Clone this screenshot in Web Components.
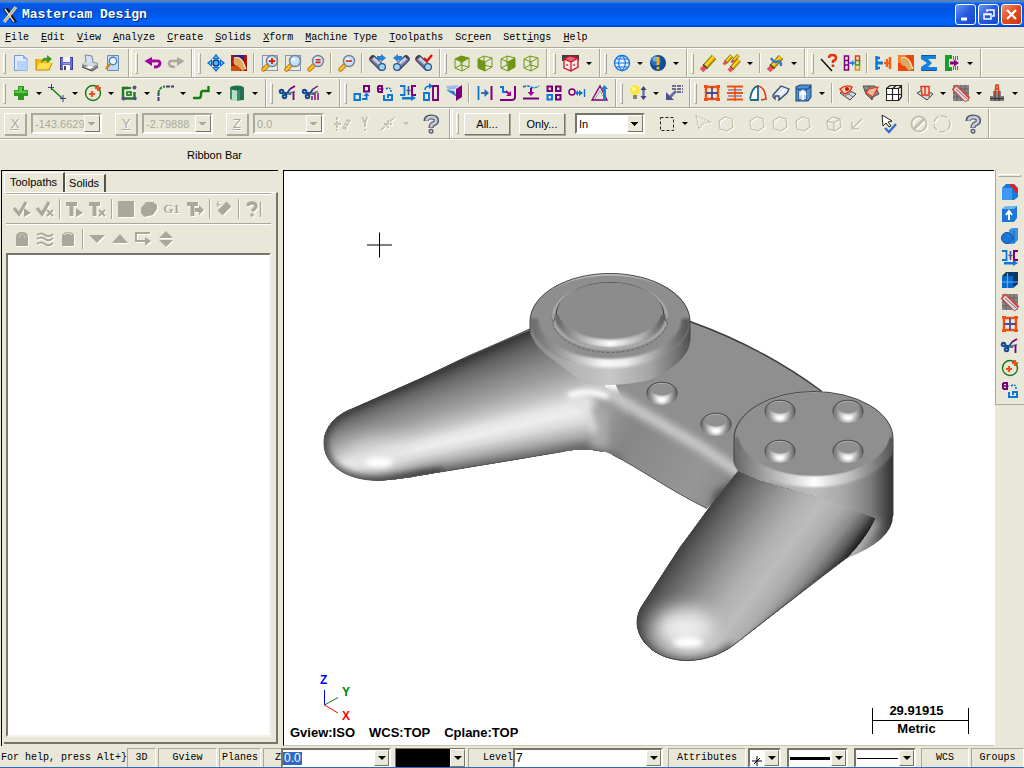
<!DOCTYPE html>
<html lang="en">
<head>
<meta charset="utf-8">
<title>Mastercam Design</title>
<style>
html,body{margin:0;height:100%;background:#e9e8d8}
body{font:11px "Liberation Sans",Arial,sans-serif;color:#000;overflow:hidden}
</style>
</head>
<body>
<cam-app></cam-app>
<script>
/* ---------- helpers ---------- */
function define(name, css, html, init){
  customElements.define(name, class extends HTMLElement{
    connectedCallback(){
      if(this.shadowRoot) return;
      const r=this.attachShadow({mode:'open'});
      r.innerHTML='<style>*{box-sizing:border-box}button,input,select{font:inherit;color:inherit;margin:0}'+css+'</style>'+(typeof html==='function'?html(this):html);
      if(init) init(this,r);
    }
  });
}
const S=(d,c,w=1.5,f='none',x='')=>`<path d="${d}" stroke="${c}" stroke-width="${w}" fill="${f}" ${x}/>`;
const F=(d,c)=>`<path d="${d}" fill="${c}"/>`;
const R=(x,y,w,h,f,s='none',sw=1)=>`<rect x="${x}" y="${y}" width="${w}" height="${h}" fill="${f}" stroke="${s}" stroke-width="${sw}"/>`;
const C=(x,y,r,f,s='none',sw=1)=>`<circle cx="${x}" cy="${y}" r="${r}" fill="${f}" stroke="${s}" stroke-width="${sw}"/>`;

/* ---------- icon set, 20 x 20 grid ---------- */
const mag=s=>S('M7.5 12.5L3.5 16.5','#a86000',4.4,'none','stroke-linecap="round"')+S('M7.5 12.5L3.5 16.5','#ffc020',2.8,'none','stroke-linecap="round"')+C(12,8,5.5,'#bfe0ff','#7a7f90',1.4)+C(10.5,6.5,2,'#eaf6ff')+s;
const dots=R(2.5,2.5,15,15,'none','#2040a0').replace('/>',' stroke-dasharray="1 1"/>');
const spy=(a,flip)=>`<g ${flip?'transform="translate(20 0) scale(-1 1)"':''}>`+S('M5 6L13 14','#3c3f58',7.4,'none','stroke-linecap="round"')+S('M3 6L11 14','#74789a',2.4)+S('M5 5L13 12','#c4cce0',3)+C(14,14,3.4,'#9cd8f4','#30508a',1.2)+'</g>'+a;
const cube=f=>f+S('M3 6L9 3L17 5L17 14L10 18L3 15ZM3 6L10 9L17 5M10 9V18M9 3V12L3 15M9 12L17 14','#6f9616',1);
const eraser=S('M6 14L15 4','#7a5a00',6)+S('M6 14L15 4','#f2c400',4.4)+S('M7 12L14 4','#ffe870',1)+S('M8.500 13.500L16 5.500','#b08800',1)+S('M2.500 17.500L6 14','#e85060',5)+S('M4 11.500L8.500 15.500','#333',1.2);
const brush=F('M5 5Q11 3 14 9L17 16L13 18L9 13Q3 13 5 5Z','#e0a860')+S('M5 5Q11 3 14 9L17 16','#fff0c0',1.2);
const scis=C(3.5,8.5,1.8,'#a8bcd8','#104890',1.9)+C(6.5,13.5,1.8,'#a8bcd8','#104890',1.9)+S('M5 9.500L13 11M8 12L12 6','#104890',1.8)+S('M9 11L17 8.500','#6a7088',1.4);
const hexa='M3 7L9 3L16 5L17 13L11 17L4 15Z';
const G='#aca899', ghost='#c3c0ad';
const qm=(c,e)=>S('M5 7Q5 3 10 3Q15.500 3 15.500 6.500Q15.500 9 12 10Q10 11 10 14',e,5.2)+S('M5.500 6.600Q6 3.200 10 3.200Q15.200 3 15.200 6.500Q15.200 9 12 10Q10 11 10 13.500',c,2.8)+C(10,17.3,1.9,c,e,1.2);
const plane=S('M2 10L9 6L18 11L12 17Z','#444',1,'#cfd4da')+S('M6 8L15 14M14 8.500L7 13','#777',1);
const pur='#780078', blu='#0a78d8';
const I={
new:F('M3 2H12L16 6V18H3Z','#dfeaff')+S('M3.5 2.5H12L16 6V17.5H3.5Z','#7896d0',1)+F('M6 8H16V17.5H6Z','#b4d4fa')+F('M12 2V6H16Z','#8fb0e8'),
open:F('M2 6H8L10 8H16V17H2Z','#f0b810')+F('M5 10H19L15 17H2Z','#ffdf50')+S('M2 6V17H15L18 10','#b88a00',1)+F('M7 10Q8 4 13 5V2L18 6L13 10V8Q9 7 7 10Z','#3a9a20'),
save:R(3.5,4.5,12,12,'#6a6ad0','#3c3c98')+R(6,4,7,5,'#f4f4ff')+R(6,12,7,5,'#fff')+R(7,13,2,4,'#444')+S('M6 10.5H13','#9898e8',1),
print:F('M2 11L8 7L18 10L18 14L12 18L2 14Z','#8a8f98')+F('M2 11L8 8L18 11L12 14Z','#d4d8de')+F('M6 9L5 2L12 3L13 9Z','#cfe2f8')+S('M6 9L5 2L12 3L13 9','#7a88a0',1)+F('M5 14L10 16L14 14L9 13Z','#fff')+S('M2 14L12 18L18 14','#444',1),
prev:F('M4 2H15V18H4Z','#bcdcfa')+S('M4.5 2.5H15.5V17.5H4.5Z','#6a8ab8',1)+C(10,8,3.7,'#e8f6ff','#5a7aa8',1.4)+S('M7 11L3 16','#c8862a',2.5),
undo:S('M5 8H12Q17 7 17 10.500Q16.500 14 11 14','#a000a0',2.8)+F('M1.500 8L9 4V13Z','#a000a0'),
redo:S('M15 8H8Q3 7 3 10.500Q3.500 14 9 14',G,2.6)+F('M18.500 8L11 4V13Z',G),
pan:C(10,10,3,'#50b8f8','#003c9c',1.5)+F('M10 1L14 6H6ZM10 19L14 14H6ZM1 10L6 6V14ZM19 10L14 6V14Z','#0868d0')+F('M10 3L12 5H8ZM10 17L12 15H8ZM3 10L5 8V12ZM17 10L15 8V12Z','#60c8ff'),
fit:R(2,2,16,16,'#a81810')+R(5,2,10,6,'#302080')+R(2,13,9,5,'#d05010')+brush,
zwin:dots+mag(S('M12 5V11M9 8H15','#e02000',1.8)),
ztar:dots+mag(''),
zeq:mag(S('M9.5 6.8H14.5M9.5 9.4H14.5','#e02000',1.6)),
unzoom:mag(S('M9 8H15','#e04020',1.8)),
spy1:spy(F('M9 3H13V1L18 5L13 9V7H9Z','#2080e0')),
spy2:spy(F('M11 3H7V1L2 5L7 9V7H11Z','#2080e0'),1),
spy3:spy(S('M10 5L13 8L18 2','#e01010',2.4)),
ctop:cube(F('M3 6L9 3L17 5L10 9Z','#6f9616')),
cfront:cube(F('M3 6L10 9V18L3 15Z','#6f9616')),
cright:cube(F('M10 9L17 5V14L10 18Z','#6f9616')),
ciso:cube(''),
redcube:F('M1 2H18V8H1Z','#404040')+F('M3 6L9 3L17 5L17 14L10 18L3 15Z','#ffe4e4')+F('M3 6L9 3L17 5L10 9Z','#e86878')+S('M3 6L9 3L17 5L17 14L10 18L3 15ZM3 6L10 9L17 5M10 9V18','#c01828',1.3)+C(6,12,1,'#d04050')+C(13,12,1,'#d04050'),
globe:C(10,10,7.5,'#e6f2ff','#1070e0',1.3)+S('M2 10H18M4 6H16M4 14H16M10 2Q3 10 10 18Q17 10 10 2','#1070e0',1.1),
ball:C(10,10,8,'#104c98')+C(8,8,5,'#2c70c0')+C(7,6,2.5,'#70b0e8')+S('M10 4V12','#ffb400',2.8)+C(10,15,1.6,'#ffb400'),
eraser:eraser,
erasers:'<g transform="scale(.65)">'+eraser+'</g><g transform="translate(5 4) scale(.8)">'+eraser+'</g><g transform="translate(8 0) scale(.55)">'+eraser+'</g>',
paint:eraser+S('M5 5Q8 10 10 9Q15 6 15 13','#2878d0',2.4),
delq:S('M2 6L13 18','#111',1.5)+S('M10 5Q10 2 13.5 2Q17 2 17 5Q17 7 14 8V10','#e03010',2.4)+R(12.7,11.5,2.6,2.4,'#e03010'),
chain:S('M2.5 3V17H6.5V3ZM2.5 7.5H6.5M2.5 12H6.5',pur,1.5)+S('M13.5 3V7.5H17.5V3Z','#e04010',1.5)+S('M13.5 7.5V12H17.5V7.5','#20a020',1.5)+S('M13.5 12V17H17.5V12','#e09010',1.5)+F('M7.500 9H10V7L13 10L10 13V11H7.500Z','#2080e0'),
tree:S('M3.5 3V17M3 5H7M3 15H7','#0a78d8',2.4)+S('M3 10H10',blu,3)+S('M17 4V16M11 10H17M14 6V14','#f06010',2.4),
brush:R(2,2,16,16,'#e84810')+R(2,2,8,8,'#f88030')+brush,
sigma:F('M2 2H17V6L9 6L13 10L9 14L18 14V18H2V14L8 10L2 6Z','#1a80e0')+S('M3 2.500H17M3 17.500H17','#0858a8',1),
cgreen:S('M10 4H5V16H10','#18a028',4)+S('M11.5 3V7M13.5 3V7M15.5 3V7M11.5 13V17M13.5 13V17M15.5 13V17','#18a028',1)+F('M8 8.5H12V6.5L17 10L12 13.5V11.5H8Z','#800080'),
plus:F('M7 3H13V7H17V13H13V17H7V13H3V7H7Z','#2f9a20')+F('M8 4H11V8H16V10H4V8H8Z','#58c840'),
line:S('M4 5L16 16','#188018',1.5)+S('M1 4.5H7M4.5 1V7M13 15.5H19M16 12V19','#3a3a98',1),
circ:C(10,10,7.5,'none','#187818',1.4)+S('M6 11H12M9 8V14M12 5H18M15 2V8','#f05020',2.2),
rect:S('M9 5H4V15.5H15.5V9','#207820',2.4)+S('M4 5H12','#207820',2.2)+R(8,9,4,3,'none','#187818',1.6)+C(15.5,4.5,2,'#50508a')+C(4.5,15.5,2,'#50508a')+C(16,15.5,1.8,'#50508a'),
fillet:S('M3.500 18V10','#3c3c78',2,'none','stroke-dasharray="4 1"')+S('M3.5 10Q4 4 10 3.5','#208020',2,'none','stroke-dasharray="3 1"')+S('M11 3.5H19','#3c3c78',2,'none','stroke-dasharray="4 1"'),
spline:S('M2 15H8Q10 15 10 12V11Q10 8 12 8H17.500V3','#108010',2.4),
cyl:F('M3 5V16Q10 20 17 16V5Z','#3c8c68')+F('M5 6V18H10V6Z','#b8e0c8')+F('M13 5H17V17H13Z','#207050')+'<ellipse cx="10" cy="5" rx="7" ry="2.5" fill="#207050"/>',
trim:scis+S('M12 6L17 3M15.500 9V17',pur,1.8),
trims:scis+S('M12 6L17 3M14 10V17M17 10V17M11 13V17',pur,1.4),
xf1:S('M2.5 11H8V17H2.5Z',blu,2)+S('M12 3H17V8.5H12Z',pur,2)+S('M10 16H14.500V12',blu,2)+F('M11.500 13L14.500 9.500L17.500 13Z',blu),
xf2:S('M3 3H7V9H3M3 9V3',pur,2)+S('M8.5 6H3',pur,1.5)+S('M9 12V17H17V12H13V14H12',blu,2)+S('M11 6Q16 3 16 9',blu,1.6,'none','stroke-dasharray="2 1"'),
xf3:S('M2 3H6.500V12H2',blu,1.8)+S('M18 3H14V12H18',pur,2)+S('M10.5 3V12M8.5 7.5H12.5','#50509a',1.6)+F('M4 14H13V12L18 15L13 18V16.5H4Z',blu),
xf4:S('M3 10H8V17H3Z',blu,1.9)+S('M12 3H17V17H12Z',pur,1.9)+S('M4 7Q4 3 9 3',blu,1.6)+F('M8 0L12 3L8 6Z',blu),
xf5:F('M2 3L15 2L11 6L4 7Z','#a0b8f0')+F('M2 7L10 8L13 14Z','#2080d0')+F('M12 6L18 2V14L12 18Z',pur),
off1:S('M3.5 3V17',blu,1.8)+S('M16.5 3V17',pur,2)+S('M6 10H12','#3060b0',1.8)+F('M9.500 6L14 10L9.500 14Z','#3060b0'),
off2:S('M2 4H5V9H9',blu,2)+S('M17 3V14Q17 17 13 17H2',pur,2)+S('M8 8L12 12','#a000a0',2)+F('M8 13H13V8Z','#a000a0'),
proj:S('M2 4Q7 2 10 4T18 3',blu,1.6,'none','stroke-dasharray="3 1"')+S('M10 5V10M2 15.5H18',pur,2)+F('M6.500 9H13.500L10 13Z','#a000a0'),
arr:R(3.5,3.5,4.5,4.5,'none',pur,2)+R(12,3.5,4.5,4.5,'none',pur,2)+R(3.5,12,4.5,4.5,'none',blu,2)+R(12,12,4.5,4.5,'none',pur,2),
move:C(5,9,3,'none',pur,1.5)+S('M9 10H15M17.500 6V14','#1070c8',1.4)+F('M12 7L16 10L12 13ZM11 7V13L8 10Z','#1070c8'),
scale:S('M2 17L10 3L17 17Z',pur,1.3)+S('M5 16L10 8L15 16','#50509a',1,'none','stroke-dasharray="1 1"')+F('M13 17V6H11L14.5 2L18 6H16V17Z','#2080d0'),
bulb:C(7,7,5,'#ffe438')+C(6,6,2,'#fff8a0')+R(5,12,4,4,'#888070')+S('M15.5 5V15','#7070a0',2.4)+F('M12.5 7L15.5 3L18.5 7ZM12.5 13H18.5L15.5 17Z','#404080'),
note:S('M8 3H19M8 6H19M13 9H19','#444478',1.4,'none','stroke-dasharray="4 1"')+S('M12 8L5 15','#6c6ca4',2.6)+F('M2 9V17H10Z','#505090'),
grid:R(4,4,12,12,'none','#f05010',2.4)+S('M10 4V16M4 10H16','#504890',1.8)+F('M2 2H6V5H2ZM14 2H18V5H14ZM2 15H6V18H2ZM14 15H18V18H14Z','#f05010'),
loft:S('M2 3.5H18M2 10H18M2 16.500H18','#f05010',2.2)+S('M3 7H17M3 13H17','#504890',1.2)+S('M10 3V18','#f05010',1.6),
rev:F('M3 16Q3 4 10 3V16Z','#fff')+S('M2 16Q4 4 10 3V17H2','#1c6c88',1.8)+S('M10 3Q17 4 18 16L13 17','#e03818',1.6),
sweep:F('M2 12L10 3L18 6L10 17Z','#dfe8f8')+S('M2 12L10 3L18 6L16 10L8 17L8 13L4 13L4 16L2 14Z','#34446c',1.3)+S('M8 12L14 6','#fff',1.5),
ext:F('M2 4L6 2H17V14L14 18H2Z','#5090d0')+S('M2 4L6 2H17V14L14 18H2ZM2 6H14L17 3M5 6V18M12 6V18','#204c80',1.1)+F('M5 8H12V16H5Z','#bcd8f0')+S('M9 17V9M6 12L9 8L12 12','#fff',2),
sf1:plane+S('M2 6Q8 1 14 4Q12 10 6 11Z','#e03818',1.4,'#f8c8b8')+C(9,6,2,'#d01000'),
sf2:F('M2 3L14 3L18 11L12 14L11 17L5 11Z','#8c8c8c')+S('M2 3L14 3L18 11L12 14L11 17L5 11ZM3 7L16 8M8 3L11 17','#555',1)+S('M8 6L17 4L12 14L5 10Z','#e03818',1.2,'#f0b8a0'),
box3:R(2.5,5.5,12,12,'#fff','#222')+S('M2.5 5.5L6 2.5H17.5V14L14.5 17.5M14.5 5.5L17.5 2.5M8.5 5.5V17.5M2.5 11.5H17.5M12 2.5L9 5.5','#222',1.2),
ms1:plane+F('M6 4H14V12H6Z','#ffd8c8')+S('M6 3.5H14V12H7ZM10 4V11','#e03818',1.5),
ms2:R(2,2,16,16,'#888')+S('M2 6H18M2 10H18M2 14H18M6 2V18M10 2V18M14 2V18','#555',.7)+S('M3 4L17 17','#e04030',7)+S('M4 5L16 17','#c8e4f4',4)+S('M5 6L16 16','#e04030',1),
ms3:R(3,13,14,5,'#777')+R(6,8,8,6,'#888')+S('M3 15.5H17M8 8V18M12 8V18','#333',1)+S('M8 12L9 2H11L12 12M8 6H12','#e03818',1.6),
hcube:R(2,6,11,12,'#0a68c8')+F('M2 6L6 2H18V14L13 18V6Z','#083868')+S('M2 12H18M7.5 3V18','#58b0f0',1.2),
sol1:F('M2 6L6 2H14L18 6V15L14 18H2Z','#1c78d8')+F('M2 6H12V18H2Z','#3c98f0')+F('M10 2L15 3L18 8V11L15 10L14 7L10 4Z','#f01818'),
sol2:F('M2 5L6 2H17V14L14 18H2Z','#1c78d8')+F('M2 5L6 2H17L14 5Z','#70b8f0')+S('M9 16V8M6 11L9 7L12 11','#fff',2),
sol3:F('M9 4Q11 2 13 2H18V14L14 18H9Z','#3c90e0')+C(7,12,5.5,'#1c78d8','#104c98',1)+S('M14 5V17','#0c60b8',1),
qhelp:qm('#c4c8d8','#50546c'),
xg1:S('M5 3V17M2 10H9M11 15L16 5M13 16L18 6',ghost,2,'none','stroke-dasharray="3 1"'),
xg2:S('M7 3L10 9L12 3M10 9V13M10 15V17',ghost,2),
xg3:S('M3 16L17 3M6 10H14M10 6V14',ghost,1.8,'none','stroke-dasharray="5 1"'),
xsel:R(3.5,3.5,13,13,'none','#222').replace('/>',' stroke-dasharray="3 2"/>'),
xp:S('M3 2L17 8L9 10L6 15Z',ghost,1.4,'none','stroke-dasharray="2 1"'),
xh:S(hexa,ghost,1.3),
xhc:S(hexa+'M3 7L10 9L16 5M10 9V17',ghost,1.4),
xar:S('M15 5L6 14M5 8V15H12',ghost,1.6),
ok:F('M4 1L14 7L10 8L13 12L11 13L8 9L5 12Z','#fff')+S('M4 1L14 7L10 8L13 12L11 13L8 9L5 12Z','#222',1)+S('M7 14L11 18L18 10','#3070d0',2.4),
no:C(10,10,7.5,'none',ghost,2)+S('M5 15L15 5',ghost,3),
xcirc:C(10,10,8,'none',ghost,1.4).replace('/>',' stroke-dasharray="7 2"/>'),
g1:S('M2 9L7 15L14 3',G,3.4)+F('M12 9L19 14L12 18Z',G),
g2:S('M2 9L7 15L14 3',G,3.4)+S('M12 11L18 17M18 11L12 17',G,2),
g3:S('M2 5H13M7.5 5V17',G,4)+F('M12 9L19 14L12 18Z',G),
g4:S('M2 5H13M7.5 5V17',G,4)+S('M12 11L18 17M18 11L12 17',G,2),
g5:R(2,2,16,16,G),g6:F('M7 3H14L18 6V10L14 16L5 18L2 14V9Z',G),
g8:S('M2 5H13M7.5 5V17',G,4)+F('M10 9H14V6L19 11L14 16V13H10Z',G),
g9:S('M6 14L15 5',G,7)+S('M2 5L7 6M4 2V8',G,1),
g10:S('M5 7Q5 4 9 4Q13 4 13 7Q13 9 9 12',G,3.4)+C(9,16,1.8,G)+S('M17.500 3V18',G,1.4),
h1:F('M4 8Q4 3 10 3Q16 3 16 8V17H4Z',G)+S('M7 9Q7 5 10 5Q13 5 13 9','#c8c5b4',1),
h2:S('M2 6Q6 3 10 6T18 5M2 10Q6 7 10 10T18 9M2 15Q6 12 10 15T18 14',G,2),
h3:F('M4 7Q5 3 10 3Q16 3 16 7V17H4Z',G)+S('M6 6Q10 2 14 6',"#e9e8d8",1),
h4:F('M2 6H18L10 14Z',G),h5:F('M2 14H18L10 5Z',G),
h6:S('M2 4H17M3 4V12H13',G,2)+F('M12 8V17L18 12Z',G),
h7:F('M3 9H17L10 2ZM3 11H17L10 18Z',G),
};
const svg=n=>`<svg width="20" height="20" viewBox="0 0 20 20" aria-hidden="true">${I[n]||''}</svg>`;
const t=(i,l,d)=>`<tool-btn icon="${i}" label="${l}" ${d?'drop':''}></tool-btn>`;
const sep='<tool-sep></tool-sep>';
const many=s=>s.trim().split(/\s+/).map(k=>k==='|'?sep:k.endsWith('+')?t(k.slice(0,-1),k.slice(0,-1),1):t(k,k)).join('');
const off=s=>many(s).replace(/<tool-btn/g,'<tool-btn dis');

define('tool-btn',`:host{display:flex;flex:none;height:100%;align-items:center}
button{border:0;background:none;padding:0;height:23px;display:flex;align-items:center;justify-content:center}
.b{width:23px}.d{width:13px}.d::after{content:"";border:3px solid transparent;border-top-color:#000;border-bottom:0}
:host([dis]) svg{filter:drop-shadow(1px 1px 0 #fff)}
:host([dis]) .d::after{border-top-color:#c3c0ad}
b{font:bold 13px "Liberation Serif",serif;color:#aca899;text-shadow:1px 1px #fff}`,
h=>`<button class="b" aria-label="${h.getAttribute('label')}">${h.getAttribute('icon')==='G1'?'<b>G1</b>':svg(h.getAttribute('icon'))}</button>`+(h.hasAttribute('drop')?'<button class="d" aria-label="More"></button>':''));
define('tool-sep',`:host{display:block;flex:none;width:8px;height:20px;align-self:center}
i{display:block;width:2px;height:100%;margin-left:3px;border-left:1px solid #aca899;border-right:1px solid #fbfaf4}`,'<i></i>');
define('tool-group',`:host{display:flex;flex:none;height:100%;align-items:center;padding:0 5px 0 3px;border-right:1px solid #fff;box-shadow:inset -1px 0 #aca899}
:host([wide]){border-right:3px double #fff}
:host([bare]){padding-right:8px}
.g{width:3px;height:21px;border:1px solid;border-color:#fff #aca899 #aca899 #fff;margin-right:3px;flex:none}
:host([bare]) .g{display:none}`,'<div class="g"></div><slot></slot>');
define('tool-row',`:host{display:flex;height:30px;flex:none;border-top:1px solid #fff;border-bottom:1px solid #aca899;overflow:hidden}`,'<slot></slot>');

define('title-bar',`:host{display:flex;align-items:center;height:27px;flex:none;padding:1px 2px 0 2px;border-top:1px solid #7a7a7a;
background:linear-gradient(#3c94ff,#0458e8 12%,#0054e0 35%,#0062fa 75%,#0060f4 90%,#0038c0);color:#fff}
h1{margin:0 0 0 4px;font:bold 13px "Liberation Mono",monospace;text-shadow:1px 1px #002878;flex:1}
button{width:21px;height:21px;margin-left:2px;padding:0;border:1px solid #fff;border-radius:3px;background:linear-gradient(135deg,#6c98f8,#2458e0 50%,#1c48cc);display:flex;align-items:center;justify-content:center}
.x{background:linear-gradient(135deg,#f09070,#e04c20 50%,#c83808)}svg{display:block}`,
`<svg width="16" height="18" viewBox="0 0 16 18"><path d="M1 3L6 2L15 16L11 17Z" fill="#111"/><path d="M14 1L2 16" stroke="#e8e0c0" stroke-width="3"/><path d="M14 1L2 16" stroke="#c09038" stroke-width="1"/><path d="M3 3L12 16" stroke="#ddd" stroke-width="1.4"/></svg>
<h1>Mastercam Design</h1>
<button aria-label="Minimize"><svg width="15" height="15"><path d="M3 12H9" stroke="#fff" stroke-width="3"/></svg></button>
<button aria-label="Restore"><svg width="15" height="15"><path d="M6 5V3H13V9H11M3 7H10V12H3ZM3 7.5H10" fill="none" stroke="#fff" stroke-width="1.5"/></svg></button>
<button class="x" aria-label="Close"><svg width="15" height="15"><path d="M3 3L12 12M12 3L3 12" stroke="#fff" stroke-width="2.2"/></svg></button>`);

define('menu-bar',`:host{display:block;flex:none;height:21px;border-bottom:1px solid #aca899}
nav{display:flex;font:10px/21px "Liberation Mono",monospace}
a{color:#000;text-decoration:none;margin:0 7px 0 5px;white-space:pre}`,
`<nav>${['_File','_Edit','_View','_Analyze','_Create','_Solids','_Xform','_Machine Type','_Toolpaths','Sc_reen','Sett_ings','_Help'].map(m=>`<a href="#">${m.replace(/_(.)/,'<u>$1</u>')}</a>`).join('')}</nav>`);

define('combo-box',`:host{display:block;flex:none;width:71px;height:21px}
select{appearance:none;display:block;width:100%;height:100%;padding:0 0 0 2px;border-radius:0;opacity:1;border:2px solid;border-color:#777469 #fff #fff #777469;
background:#fff;color:#000;outline:0}
.w{position:relative;height:100%}
.w::after{content:"";position:absolute;right:2px;top:2px;bottom:2px;width:16px;box-sizing:border-box;border:1px solid;border-color:#fff #777469 #777469 #fff;
background:linear-gradient(#000,#000) 3px 6px/7px 1px no-repeat,linear-gradient(#000,#000) 4px 7px/5px 1px no-repeat,linear-gradient(#000,#000) 5px 8px/3px 1px no-repeat,linear-gradient(#000,#000) 6px 9px/1px 1px no-repeat,#e9e8d8;pointer-events:none}
:host([dis]) select{background:#e9e8d8;color:#aca899;border-color:#aca899 #fff #fff #aca899}
:host([dis]) .w::after{background:linear-gradient(#aca899,#aca899) 3px 6px/7px 1px no-repeat,linear-gradient(#aca899,#aca899) 4px 7px/5px 1px no-repeat,linear-gradient(#aca899,#aca899) 5px 8px/3px 1px no-repeat,#e9e8d8}`,
h=>`<div class="w"><select aria-label="${h.getAttribute('label')}" ${h.hasAttribute('dis')?'disabled':''}><option>${h.getAttribute('value')}</option></select></div>`);

define('tool-bars',`:host{display:block;flex:none}
.k{width:22px;height:22px;margin-right:5px;padding:0;font-size:13px;border:1px solid;border-color:#fff #aca899 #aca899 #fff;box-shadow:1px 1px #aca899;background:#e9e8d8;color:#aca899;text-shadow:1px 1px #fff}
.k:first-child{margin-left:1px}
.c{margin-right:13px}.last{margin-right:6px}.in{margin:0 10px;width:70px}
.p{width:46px;height:22px;margin-right:9px;padding:0;border:1px solid;border-color:#fff #777469 #777469 #fff;box-shadow:1px 1px #aca899;background:#e9e8d8}
.first{margin-left:2px}.only{margin-right:0}.sp{width:7px;flex:none}.sp2{width:8px;flex:none}
.r{height:31px}.rib{height:31px;border-top:1px solid #fff;padding-left:187px;line-height:30px}`,
`<tool-row><tool-group wide>${many('new open save print prev')}</tool-group><tool-group wide>${many('undo redo')}</tool-group>
<tool-group>${many('pan fit | zwin ztar zeq | unzoom | spy1 spy2 spy3')}</tool-group><tool-group wide>${many('ctop cfront cright ciso')}</tool-group>
<tool-group>${many('redcube+')}</tool-group><tool-group>${many('globe+ ball+')}</tool-group><tool-group wide>${many('eraser erasers+ | paint+')}</tool-group>
<tool-group>${many('delq chain | tree brush sigma cgreen+')}</tool-group></tool-row>
<tool-row><tool-group>${many('plus+ line+ circ+ rect+ fillet+ spline+ cyl+')}</tool-group><tool-group>${many('trim trims+')}</tool-group>
<tool-group>${many('xf1 xf2 xf3 xf4 xf5 | off1 off2 proj arr move scale')}</tool-group><tool-group>${many('bulb+ note')}</tool-group>
<tool-group>${many('grid loft rev sweep ext+ | sf1 sf2 box3 | ms1+ ms2+ ms3+')}</tool-group></tool-row>
<tool-row class="r"><tool-group bare wide><button class="k" disabled><u>X</u></button><combo-box class="c" dis label="X" value="-143.6629"></combo-box>
<button class="k" disabled><u>Y</u></button><combo-box class="c" dis label="Y" value="-2.79888"></combo-box>
<button class="k" disabled><u>Z</u></button><combo-box class="last" dis label="Z" value="0.0"></combo-box>
${off('xg1 xg2 xg3+')}<div class="sp"></div>${many('qhelp')}</tool-group>
<tool-group><button class="p first">All...</button><button class="p only">Only...</button><combo-box class="in" label="Selection mode" value="In"></combo-box>
${many('xsel+')}${off('xp xh')}<div class="sp2"></div>${off('xh xh xh')}<div class="sp2"></div>${off('xhc xar')}<div class="sp2"></div>${many('ok')}<div class="sp2"></div>${off('no xcirc')}<div class="sp2"></div>${many('qhelp')}</tool-group></tool-row>
<div class="rib">Ribbon Bar</div>`);

define('manager-panel',`:host{display:flex;flex-direction:column;width:277px;flex:none;margin-left:1px;border-top:1px solid #000;border-left:1px solid #000;padding:1px 0 2px 2px}
.tabs{display:flex;height:20px;align-items:flex-end}
.tabs button{border:0;background:none;padding:0 5px;height:20px;border-right:2px solid #555248;border-top:1px solid #fff;border-left:1px solid #fff}
.tabs .on{padding:0 6px 2px 5px}.tabs .off{height:18px;padding:0 5px 1px 3px}
.body{flex:1;display:flex;flex-direction:column;border-top:1px solid #fff;border-right:2px solid #777469;border-bottom:2px solid #777469;padding:0 5px 5px 2px}
.row{display:flex;height:30px;flex:none;padding-left:4px;border-top:1px solid #aca899;box-shadow:inset 0 1px #fff}
tool-sep{width:6px}
.list{flex:1;margin:0;background:#fff;border:2px solid;border-color:#777469 #f4f3ea #f4f3ea #777469}`,
`<div class="tabs" role="tablist"><button class="on" role="tab">Toolpaths</button><button class="off" role="tab">Solids</button></div>
<div class="body"><div class="row">${off('g1 g2 | g3 g4 | g5 g6 G1 g8 | g9 | g10')}</div>
<div class="row">${off('h1 h2 h3 | h4 h5 h6 h7')}</div><div class="list"></div></div>`);

/* ---------- shaded game pad model ---------- */
const hex=v=>{v=Math.round(v);return `rgb(${v},${v},${v})`};
function shade(stops,u){for(let i=1;i<stops.length;i++)if(u<=stops[i][0]){const a=stops[i-1],b=stops[i];return a[1]+(b[1]-a[1])*(u-a[0])/(b[0]-a[0]);}return stops[stops.length-1][1];}
/* strips running from edge A0-A1 to edge B0-B1, shaded across; each strip reaches to the far side and the next one covers it */
function ruled(A0,A1,B0,B1,stops,n=60){
  const L=(p,q,u)=>[p[0]+(q[0]-p[0])*u,p[1]+(q[1]-p[1])*u];let o='';
  for(let i=0;i<n;i++){const p=[L(A0,A1,i/n),L(B0,B1,i/n),B1,A1];
    o+=`<polygon points="${p.map(q=>q.map(v=>v.toFixed(1)).join()).join(' ')}" fill="${hex(shade(stops,(i+.5)/n))}"/>`;}
  return o;
}
const lin=(id,x1,y1,x2,y2,st)=>`<linearGradient id="${id}" gradientUnits="userSpaceOnUse" x1="${x1}" y1="${y1}" x2="${x2}" y2="${y2}">${st.map(s=>`<stop offset="${s[0]}" stop-color="${hex(s[1])}"/>`).join('')}</linearGradient>`;
const blur=(id,sd)=>`<filter id="${id}" filterUnits="userSpaceOnUse" x="284" y="171" width="710" height="573"><feGaussianBlur stdDeviation="${sd}"/></filter>`;
const lg='M533 327L470 354L423 377L353 408C338 413 324 426 324 442C324 466 348 480 380 480C400 479 420 475 443 471L510 460L563 451C580 448 596 448 612 454L640 430L600 380Z';
const rg='M738 471L707 510L680 547L643 604C637 612 636 622 638 629C643 648 664 660 687 660C706 660 722 653 733 645L787 603L820 577L847 557C858 546 868 533 875 518L846 506L787 488L758 480Z';
const knob=(x,y)=>`<g transform="translate(${x} ${y})"><path d="M-15 0C-15 -15 15 -15 15 0V3C13 14 -13 14 -15 3Z" fill="url(#kn)"/><path d="M-15 2V0C-15 -15 15 -15 15 0V2" fill="none" stroke="#444" stroke-width="1"/><path d="M-12 -1Q0 14 12 -1" stroke="url(#kr)" stroke-width="6" fill="none" filter="url(#bk)"/><ellipse cy="-4" rx="11" ry="6" fill="#909090"/></g>`;
const model=`<defs>${blur('b1',1.3)}${blur('b3',3.5)}${blur('b8',9)}${blur('b2',2.5)}
<filter id="bk" x="-40%" y="-80%" width="180%" height="260%"><feGaussianBlur stdDeviation="1"/></filter>
${lin('kn',-15,0,15,0,[[0,110],[.3,175],[.5,190],[.75,160],[1,100]])}
${lin('kr',-13,0,13,0,[[0,120],[.4,255],[.6,255],[1,110]])}
${lin('padL',530,0,690,0,[[0,130],[.25,178],[.5,200],[.75,165],[.93,110],[1,80]])}
${lin('padR',734,0,894,0,[[0,100],[.2,165],[.5,190],[.7,165],[.85,125],[1,45]])}
${lin('rimL',534,0,686,0,[[0,110],[.2,165],[.45,245],[.6,240],[.8,165],[1,90]])}
${lin('rimI',556,0,664,0,[[0,100],[.2,165],[.5,255],[.8,175],[1,90]])}
${lin('rimR',738,0,890,0,[[0,110],[.25,185],[.5,255],[.75,185],[1,90]])}
${lin('front',600,430,720,490,[[0,150],[.2,134],[.8,150],[1,140]])}
<clipPath id="cl"><path d="${lg}"/></clipPath><clipPath id="cr"><path d="${rg}"/></clipPath>
<clipPath id="pr"><path d="M734 438V464L740 474L800 500L870 522L846 558Q893 540 893 515V438A79.500 47 0 0 0 734 438Z"/></clipPath>
<clipPath id="pl"><path d="M530 321V332Q534 344 546 354L583 382C600 386 640 386 662 374C680 362 690 352 690 340V321A80 48 0 0 0 530 321Z"/></clipPath>
<clipPath id="cb"><path d="M530 370L690 321C735 337 780 360 822 391L742 480L707 508C670 490 640 468 612 454Q592 445 563 451L530 456Z"/></clipPath></defs>
<g clip-path="url(#cl)">
${ruled([180,475],[235,505],[611,296],[635,446],[[0,60],[.12,98],[.25,130],[.4,160],[.52,192],[.62,228],[.69,238],[.77,218],[.87,170],[.94,118],[1,84]],100)}
<path d="M353 408C338 413 324 426 324 442C324 466 348 480 380 480L443 471" fill="none" stroke="#3a3a3a" stroke-width="7" filter="url(#b3)"/>
<path d="M533 327L423 377L353 408" fill="none" stroke="#333" stroke-width="5" filter="url(#b3)"/>
<ellipse cx="376" cy="454" rx="34" ry="16" fill="#ddd" opacity=".6" filter="url(#b8)"/>
<ellipse cx="379" cy="462" rx="14" ry="5" fill="#fff" filter="url(#b2)"/></g>
<path d="M353 408C338 413 324 426 324 442C324 466 348 480 380 480L443 471L563 451" fill="none" stroke="#555" stroke-width="1"/>
<path d="M353 408L423 377L533 327" fill="none" stroke="#444" stroke-width="1"/>
<g clip-path="url(#cb)">
<path d="M590 405L640 400V475L590 462Z" fill="#a8a8a8" filter="url(#b3)"/>
<path d="M612 376L690 321C735 337 780 360 822 391L742 480L640 440Z" fill="#8f8f8f"/>
<path d="M590 392H625V410H600Z" fill="#999" filter="url(#b3)"/>
<path d="M610 402L745 478L707 518L606 466Z" fill="url(#front)" filter="url(#b3)"/>
<path d="M640 424L742 478L707 514L640 480Z" fill="url(#front)"/>
<path d="M574 398Q590 410 594 432" stroke="#e0e0e0" stroke-width="7" fill="none" filter="url(#b3)"/>
<path d="M548 458Q592 440 622 460" stroke="#666" stroke-width="6" fill="none" filter="url(#b3)"/>
<path d="M584 391Q606 389 628 404L700 446L744 475" fill="none" stroke="#c8c8c8" stroke-width="11" filter="url(#b3)"/>
<path d="M568 395Q588 388 608 396" fill="none" stroke="#fff" stroke-width="6" filter="url(#b2)"/>
<path d="M738 482L718 494L714 508" fill="none" stroke="#444" stroke-width="7" filter="url(#b3)"/></g>
<path d="M690 321C735 337 780 360 822 391" fill="none" stroke="#3c3c3c" stroke-width="1.5"/>
<path d="M612 454C640 468 670 490 707 508" fill="none" stroke="#555" stroke-width="1"/>
<g clip-path="url(#pl)"><path d="M530 270H691V386H530Z" fill="url(#padL)"/>
<ellipse cx="610" cy="321" rx="80" ry="46" fill="#8e8e8e"/>
<path d="M534 318A76 45 0 0 0 686 318" fill="none" stroke="url(#rimL)" stroke-width="9" filter="url(#b1)"/></g>
<path d="M530 332V321A80 48 0 0 1 690 321V340" fill="none" stroke="#444"/>
<ellipse cx="610" cy="316" rx="58" ry="34" fill="#a8a8a8"/>
<path d="M553 322A58 34 0 0 1 667 322" fill="none" stroke="#555"/>
<path d="M552 318A58 34 0 0 0 668 318" fill="none" stroke="#666" stroke-dasharray="3 2"/>
<ellipse cx="610" cy="315" rx="55" ry="33" fill="#999"/>
<path d="M556 315A54 33 0 0 1 664 315V320" fill="none" stroke="#3c3c3c"/>
<path d="M558 314A52 29 0 0 0 662 314" fill="none" stroke="url(#rimI)" stroke-width="7" filter="url(#b1)"/>
<ellipse cx="610" cy="310" rx="52" ry="28" fill="#8c8c8c"/>
<g clip-path="url(#pr)"><path d="M734 390H895V560H734Z" fill="url(#padR)"/>
<path d="M877 520L850 557" stroke="#ddd" opacity=".4" stroke-width="10" filter="url(#b3)"/>
<ellipse cx="814" cy="437" rx="79" ry="45" fill="#8f8f8f"/>
<path d="M737 437A77 44 0 0 0 891 437" fill="none" stroke="url(#rimR)" stroke-width="11" filter="url(#b1)"/>
<ellipse cx="814" cy="434" rx="75.500" ry="41" fill="#8f8f8f"/></g>
<path d="M734 462V438A79.500 47 0 0 1 893 438V515" fill="none" stroke="#444"/>
<g clip-path="url(#cr)">
${ruled([590,665],[750,690],[735,459],[897,501],[[0,70],[.1,88],[.22,118],[.35,150],[.5,178],[.62,188],[.74,172],[.84,138],[.92,85],[1,35]],100)}
<path d="M738 471L680 547L643 604C636 612 636 622 638 629C643 648 664 660 687 660C706 660 722 653 733 645" fill="none" stroke="#3a3a3a" stroke-width="5" filter="url(#b3)"/>
<path d="M750 645L787 613L847 566L882 518" fill="none" stroke="#151515" stroke-width="11" filter="url(#b3)"/>
<ellipse cx="684" cy="628" rx="30" ry="20" fill="#ececec" filter="url(#b8)"/>
<ellipse cx="688" cy="642" rx="15" ry="5" fill="#fff" filter="url(#b2)"/></g>
<path d="M738 471L680 547L643 604C637 612 636 622 638 629C643 648 664 660 687 660C706 660 722 653 733 645L787 603L847 557" fill="none" stroke="#444" stroke-width="1"/>
${knob(662,393)}${knob(716,424)}${knob(780,411)}${knob(848,411)}${knob(780,451)}${knob(848,451)}
<path d="M367 244.5H392M379.5 232V257" stroke="#000" fill="none"/>`;

define('model-view',`:host{display:block;position:relative;flex:1;min-width:0;margin-left:5px;background:#fff;border-top:1px solid #000;border-left:1px solid #000;border-bottom:1px solid #c8c5b4;font:bold 13px "Liberation Sans",Arial,sans-serif;overflow:hidden}
.m{display:block;width:100%;height:100%}
.v{position:absolute;left:6px;bottom:4px;display:flex;gap:14px;line-height:16px}
.ax{position:absolute;left:30px;bottom:21px}
.s{position:absolute;right:25px;bottom:8px;width:97px;text-align:center;line-height:16px}
.s div{padding-right:8px;height:17px}.s .u{border-top:1px solid #000}
.s::before{content:"";position:absolute;left:0;right:0;top:5px;bottom:3px;border:solid #000;border-width:0 1px}
svg text{font:bold 12px "Liberation Sans",Arial,sans-serif}`,
`<svg class="m" viewBox="284 171 710 573" role="img" aria-label="Game pad model">${model}</svg>
<svg class="ax" width="44" height="54"><path d="M10.500 20V35" stroke="#00f"/><path d="M10.500 35L24 27.500" stroke="green"/><path d="M10.500 35L24 43" stroke="red"/><text x="6" y="14" fill="#00f">Z</text><text x="28" y="26" fill="green">Y</text><text x="28" y="50" fill="red">X</text></svg>
<div class="v"><span>Gview:ISO</span><span>WCS:TOP</span><span>Cplane:TOP</span></div>
<div class="s"><div>29.91915</div><div class="u">Metric</div></div>`);

define('side-rail',`:host{display:block;width:30px;flex:none;border-left:1px solid #fff}
.w{border-bottom:1px solid #aca899;padding:4px 0 3px 2px;border-left:1px solid #aca899}
.g{height:3px;width:23px;border:1px solid;border-color:#fff #aca899 #aca899 #fff;margin-bottom:4px}
tool-btn{height:22px}`,`<div class="w"><div class="g"></div>${many('sol1 sol2 sol3 xf3 hcube ms2 grid trim circ xf2')}</div>`);

define('status-bar',`:host{display:flex;height:20px;flex:none;margin-top:2px;border-bottom:1px solid #3868b0;font:10px/18px "Liberation Mono",monospace;overflow:hidden}
.h{width:126px;margin:1px 0 0 1px;flex:none;white-space:nowrap}
button.c,.c{border:1px solid;border-color:#aca899 #fff #fff #aca899;background:none;padding:0;text-align:center;height:20px;margin-right:2px;flex:none;white-space:nowrap}
.e{display:flex;flex:none;height:20px;border:2px solid;border-color:#777469 #fff #fff #777469;background:#fff;margin-right:2px}
input{flex:1;min-width:0;border:0;padding:0 0 0 1px;font:12px "Liberation Sans",Arial,sans-serif;background:#fff;outline:0}
.z{color:#fff;background:linear-gradient(#316ac5,#316ac5) 0 2px/19px 13px no-repeat #fff}
.a{width:15px;flex:none;border:1px solid;border-color:#fff #777469 #777469 #fff;background:#e9e8d8;padding:0;display:flex;align-items:center;justify-content:center}
.a::after{content:"";border:4px solid transparent;border-top-color:#000;border-bottom:0}
.l{flex:1;margin:auto 1px;background:#000}`,
`<div class="h">For help, press Alt+}</div><button class="c" style="width:29px">3D</button><button class="c" style="width:59px">Gview</button><button class="c" style="width:42px">Planes</button>
<label class="c" for="z" style="width:18px;margin:0;text-align:right;border-right:0">Z</label><div class="e" style="width:110px"><input id="z" class="z" value="0.0"><button class="a" aria-label="Z list"></button></div>
<div class="e" style="width:71px;border-width:1px;margin-left:2px"><div style="flex:1;background:#000"></div><button class="a" aria-label="Colour"></button></div>
<label class="c" for="lv" style="width:45px;margin:0;text-align:left;padding-left:14px;border-right:0">Level</label><div class="e" style="width:150px;margin-right:5px"><input id="lv" value="7"><button class="a" aria-label="Level list"></button></div>
<button class="c" style="width:78px">Attributes</button><div class="e" style="width:33px;margin-right:6px"><svg width="14" height="18"><path d="M2 11H12M7 6V16M4 14L10 8" stroke="#000"/></svg><button class="a" aria-label="Point style"></button></div>
<div class="e" style="width:61px;margin-right:6px"><div class="l" style="height:3px"></div><button class="a" aria-label="Line style"></button></div>
<div class="e" style="width:62px;margin-right:5px"><div class="l" style="height:1px"></div><button class="a" aria-label="Line width"></button></div>
<button class="c" style="width:48px">WCS</button><button class="c" style="flex:1;margin:0">Groups</button>`);

define('cam-app',`:host{display:flex;flex-direction:column;height:100vh;background:#e9e8d8}
main{flex:1;display:flex;min-height:0}`,
`<title-bar></title-bar><menu-bar></menu-bar><tool-bars></tool-bars><main><manager-panel></manager-panel><model-view></model-view><side-rail></side-rail></main><status-bar></status-bar>`);
</script>
</body>
</html>
